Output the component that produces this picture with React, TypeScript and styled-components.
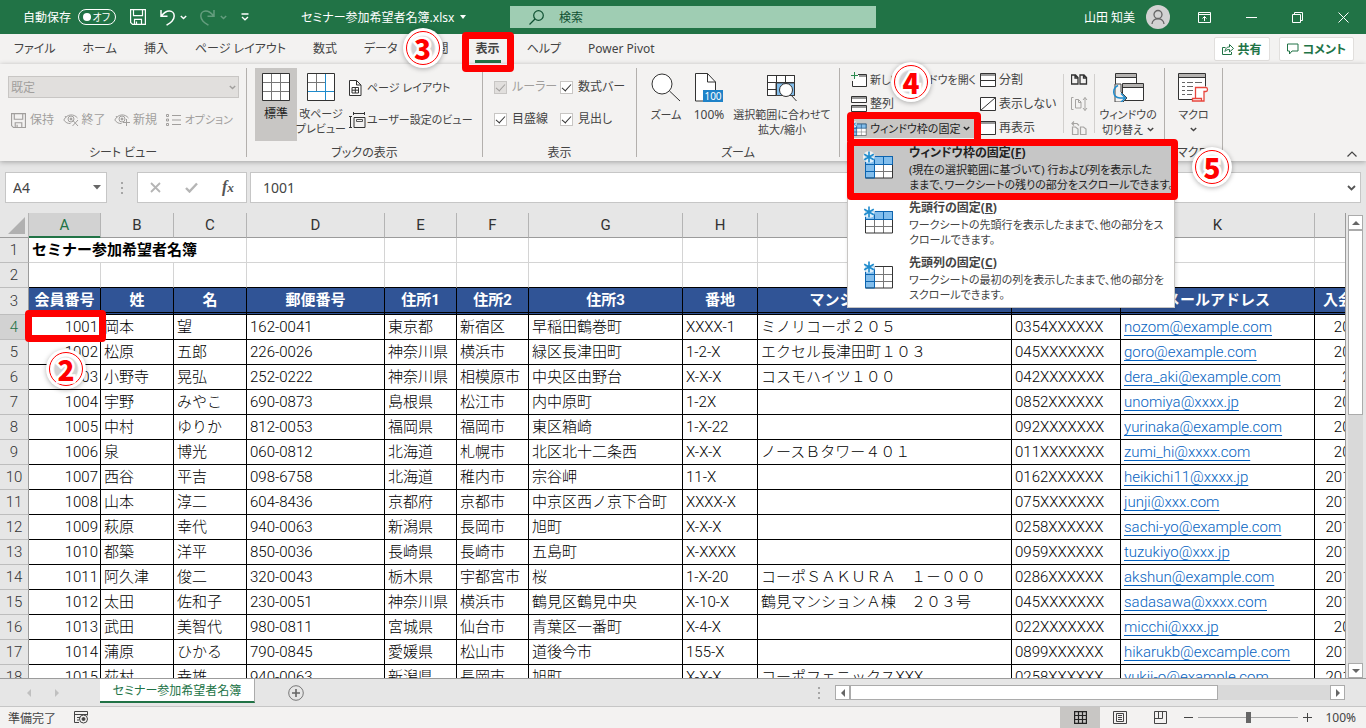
import React from "react";
import styled, { createGlobalStyle, css } from "styled-components";

const UI_FONT = '"Noto Sans", "Noto Sans CJK JP", sans-serif';
const CELL_FONT = 'Roboto, "Noto Sans CJK JP", sans-serif';
const GREEN = "#217346";
const RED = "#ff0000";

const Global = createGlobalStyle`
  * { box-sizing: border-box; }
  body { margin: 0; font-family: ${UI_FONT}; font-size: 12px; color: #444; font-feature-settings: "palt"; }
  button, input, select { font: inherit; color: inherit; font-feature-settings: inherit; }
  button { border: 0; padding: 0; background: none; white-space: nowrap; }
  svg { display: block; flex: none; }
`;

const Page = styled.div`
  height: 100vh;
  display: flex;
  flex-direction: column;
  overflow: hidden;
  background: #e6e6e6;
`;

/* ---------- annotations ---------- */

const Frame = styled.span<{ $t: number; $l: number; $r: number; $b: number; $z?: number }>`
  position: absolute;
  top: ${(p) => p.$t}px;
  left: ${(p) => p.$l}px;
  right: ${(p) => p.$r}px;
  bottom: ${(p) => p.$b}px;
  border: 7px solid ${RED};
  border-radius: 4px;
  z-index: ${(p) => p.$z ?? 5};
  pointer-events: none;
`;

const Badge = styled.span<{ $t: number; $l: number }>`
  position: absolute;
  top: ${(p) => p.$t}px;
  left: ${(p) => p.$l}px;
  width: 40px;
  height: 40px;
  border-radius: 50%;
  background: #fff;
  box-shadow: 0 1px 5px rgba(0, 0, 0, 0.3);
  display: grid;
  place-items: center;
  z-index: 20;
  font: 900 28px/28px "Noto Sans CJK JP", sans-serif;
  color: ${RED};
  -webkit-text-stroke: 5px #fff;
  paint-order: stroke fill;
  &::before {
    content: "";
    position: absolute;
    inset: 3px;
    border: 1px solid ${RED};
    border-radius: 50%;
    background: radial-gradient(circle, #d2d2d2 0 11px, #fff 13px);
  }
  & > b { position: relative; }
`;

const Step = ({ n, t, l }: { n: number; t: number; l: number }) => (
  <Badge $t={t} $l={l}>
    <b>{n}</b>
  </Badge>
);

/* ---------- title bar ---------- */

const TitleBar = styled.header`
  flex: none;
  height: 34px;
  background: ${GREEN};
  color: #fff;
  display: grid;
  grid-template-columns: 510fr 366fr 490fr;
  align-items: center;
`;
const TitleLeft = styled.div`
  display: flex;
  align-items: center;
  padding-left: 23px;
`;
const Toggle = styled.button`
  width: 38px;
  height: 16px;
  margin: 0 14px 0 7px;
  border: 1px solid #fff;
  border-radius: 8px;
  display: flex;
  align-items: center;
  justify-content: space-between;
  padding: 0 5px 0 4px;
  font-size: 10px;
  line-height: 14px;
  color: #fff;
  &::before {
    content: "";
    width: 8px;
    height: 8px;
    border-radius: 50%;
    background: #fff;
  }
`;
const QuickButton = styled.button<{ $gap?: number; $dim?: boolean }>`
  color: #fff;
  display: flex;
  align-items: center;
  gap: 5px;
  margin-right: ${(p) => p.$gap ?? 0}px;
  opacity: ${(p) => (p.$dim ? 0.3 : 1)};
`;
const FileName = styled.button`
  display: flex;
  align-items: center;
  gap: 6px;
  color: #fff;
  margin-left: 52px;
`;
const Search = styled.label`
  height: 22px;
  background: #9fcdb3;
  display: flex;
  align-items: center;
  padding-left: 19px;
  gap: 15px;
  color: #0f5132;
`;
const SearchInput = styled.input`
  flex: 1;
  min-width: 0;
  border: 0;
  outline: 0;
  padding: 0;
  background: none;
  &::placeholder { color: #0f5132; opacity: 1; }
`;
const TitleRight = styled.div`
  display: flex;
  align-items: center;
  justify-content: flex-end;
  padding-right: 17px;
`;
const Avatar = styled.span`
  width: 24px;
  height: 24px;
  margin: 0 28px 0 11px;
  border-radius: 50%;
  background: #d2d2d2;
  display: grid;
  place-items: center;
`;
const WindowButtons = styled.div`
  display: flex;
  gap: 35px;
  button { color: #fff; }
`;

/* ---------- tabs ---------- */

const TabRow = styled.nav`
  flex: none;
  height: 30px;
  background: #f3f2f1;
  display: flex;
  align-items: center;
  padding: 0 12px 0 14px;
`;
const Tabs = styled.div`
  display: flex;
  gap: 27px;
  flex: 1;
`;
const Tab = styled.button<{ $active?: boolean }>`
  position: relative;
  line-height: 20px;
  ${(p) =>
    p.$active &&
    css`
      font-weight: 700;
      &::after {
        content: "";
        position: absolute;
        left: -1px;
        right: -1px;
        bottom: -4px;
        height: 3px;
        background: ${GREEN};
      }
    `}
`;
const ShareButton = styled.button`
  height: 24px;
  margin-left: 9px;
  padding: 0 7px;
  border: 1px solid #e1dfdd;
  border-radius: 2px;
  background: #fff;
  color: ${GREEN};
  font-weight: 700;
  display: flex;
  align-items: center;
  gap: 4px;
`;

/* ---------- ribbon ---------- */

const Ribbon = styled.section`
  flex: none;
  position: relative;
  z-index: 10;
  height: 97px;
  padding: 4px 0;
  background: #f3f2f1;
  display: flex;
  box-shadow: 0 1px 5px rgba(0, 0, 0, 0.3);
`;
const Group = styled.div<{ $w: number }>`
  flex: none;
  width: ${(p) => p.$w}px;
  border-right: 1px solid #b3b0ad;
  display: flex;
  flex-direction: column;
`;
const GroupBody = styled.div<{ $pad?: number }>`
  flex: 1;
  min-height: 0;
  display: flex;
  padding-left: ${(p) => p.$pad ?? 0}px;
`;
const GroupLabel = styled.div`
  height: 12px;
  line-height: 16px;
  text-align: center;
  white-space: nowrap;
`;
const SheetView = styled.div`
  flex: 1;
  padding: 8px 7px 0 8px;
`;
const ViewSelect = styled.select`
  display: block;
  width: 100%;
  height: 22px;
  padding: 0 2px;
  border: 1px solid #c8c6c4;
  background: #e1dfdd;
  color: #a19f9d;
  opacity: 1;
  appearance: none;
`;
const SelectWrap = styled.div`
  position: relative;
  color: #a19f9d;
  & > svg { position: absolute; right: 3px; top: 9px; }
`;
const ViewActions = styled.div`
  display: flex;
  justify-content: space-between;
  padding: 12px 6px 0 3px;
  color: #a19f9d;
`;
const SmallButton = styled.button<{ $gap?: number; $compact?: boolean }>`
  display: flex;
  align-items: center;
  gap: ${(p) => p.$gap ?? 4}px;
  height: 20px;
  font-size: ${(p) => (p.$compact ? 11 : 12)}px;
  line-height: 20px;
`;
const BigButton = styled.button<{ $w: number; $active?: boolean; $compact?: boolean }>`
  flex: none;
  width: ${(p) => p.$w}px;
  height: 73px;
  padding-top: 5px;
  display: flex;
  flex-direction: column;
  align-items: center;
  gap: 5px;
  font-size: ${(p) => (p.$compact ? 11 : 12)}px;
  line-height: 15px;
  background: ${(p) => (p.$active ? "#c8c6c4" : "none")};
  color: ${(p) => (p.$active ? "#222" : "inherit")};
`;
const CaretLine = styled.span`
  display: flex;
  align-items: center;
  justify-content: center;
  gap: 4px;
`;
const Stack = styled.div<{ $gap: number; $top: number; $left?: number }>`
  display: flex;
  flex-direction: column;
  align-items: flex-start;
  gap: ${(p) => p.$gap}px;
  padding: ${(p) => p.$top}px 0 0 ${(p) => p.$left ?? 0}px;
`;
const CheckGrid = styled.div`
  display: grid;
  grid-template-columns: 66px auto;
  grid-auto-rows: 20px;
  row-gap: 12px;
  align-content: start;
  padding: 9px 0 0 11px;
`;
const CheckLabel = styled.label<{ $off?: boolean }>`
  display: flex;
  align-items: center;
  gap: 5px;
  line-height: 20px;
  white-space: nowrap;
  color: ${(p) => (p.$off ? "#a19f9d" : "inherit")};
`;
const CheckBox = styled.input`
  appearance: none;
  flex: none;
  width: 13px;
  height: 13px;
  margin: 0;
  border: 1px solid #c8c6c4;
  background: #fff;
  display: grid;
  place-items: center;
  &:disabled { background: #e1dfdd; }
  &:checked::after {
    content: "";
    width: 4px;
    height: 8px;
    margin-bottom: 3px;
    border: solid #333;
    border-width: 0 1px 1px 0;
    rotate: 42deg;
  }
  &:disabled::after { border-color: #a19f9d; }
`;
const WindowCol = styled(Stack)<{ $w: number }>`
  flex: none;
  width: ${(p) => p.$w}px;
`;
const Rule = styled.span`
  flex: none;
  width: 1px;
  height: 59px;
  margin-top: 6px;
  background: #d2d0ce;
`;
const FreezeAnchor = styled.div`
  position: relative;
  width: 124px;
  height: 20px;
  background: #c8c6c4;
`;
const FreezeButton = styled.button`
  display: flex;
  align-items: center;
  gap: 3px;
  width: 100%;
  height: 100%;
  font-size: 11px;
  color: #222;
`;
const Collapse = styled.button`
  align-self: flex-end;
  margin: 0 9px 0 auto;
`;

/* ---------- freeze menu ---------- */

const Menu = styled.div`
  position: absolute;
  top: 23px;
  left: -4px;
  width: 328px;
  border: 1px solid #c8c6c4;
  background: #fff;
  box-shadow: 1px 2px 4px rgba(0, 0, 0, 0.15);
  z-index: 12;
`;
const MenuItem = styled.button<{ $active?: boolean }>`
  position: relative;
  display: flex;
  width: 100%;
  height: 55px;
  padding: 3px 0 0 15px;
  gap: 16px;
  text-align: left;
  font-size: 12px;
  background: ${(p) => (p.$active ? "#c6c6c6" : "#fff")};
  color: ${(p) => (p.$active ? "#222" : "#444")};
  & > svg { margin-top: 6px; }
`;
const MenuTitle = styled.b`
  display: block;
  line-height: 16px;
`;
const MenuText = styled.span`
  display: block;
  margin-top: 1px;
  font-size: 11px;
  line-height: 15px;
`;

/* ---------- formula bar ---------- */

const FormulaBar = styled.section`
  flex: none;
  display: flex;
  align-items: center;
  padding: 11px 5px 10px;
  font-size: 14px;
`;
const Box = styled.div<{ $w?: number }>`
  height: 31px;
  min-width: 0;
  flex: ${(p) => (p.$w ? `0 0 ${p.$w}px` : "1")};
  border: 1px solid #c6c6c6;
  background: #fff;
  display: flex;
  align-items: center;
  justify-content: space-between;
`;
const BarInput = styled.input<{ $pad: number }>`
  flex: 1;
  min-width: 0;
  border: 0;
  outline: 0;
  padding: 0 0 0 ${(p) => p.$pad}px;
  background: none;
`;
const Dots = styled.span<{ $m: string }>`
  flex: none;
  width: 2px;
  height: 12px;
  margin: ${(p) => p.$m};
  background: repeating-linear-gradient(#a6a6a6 0 2px, transparent 2px 5px);
`;
const FxButtons = styled(Box)`
  margin-right: 3px;
  padding: 0 12px;
`;
const Fx = styled.button`
  font: italic 700 16px/20px "Liberation Serif", serif;
  color: #555;
`;

/* ---------- sheet ---------- */

const SheetArea = styled.main`
  flex: 1;
  min-height: 0;
  display: flex;
`;
const SheetClip = styled.div`
  flex: 1;
  min-width: 0;
  overflow: hidden;
  border-right: 1px solid #9b9b9b;
`;
const Sheet = styled.table`
  table-layout: fixed;
  width: 1407px;
  border-collapse: separate;
  border-spacing: 0;
  font-family: ${CELL_FONT};
  font-size: 15px;
  font-weight: 300;
  font-feature-settings: normal;
  color: #000;
  line-height: 22px;
  th, td { padding: 0; height: 25px; white-space: nowrap; overflow: hidden; }
`;
const ColHead = styled.th<{ $active?: boolean }>`
  font-weight: 400;
  color: ${(p) => (p.$active ? GREEN : "#333")};
  background: ${(p) => (p.$active ? "#d2d2d2" : "#e6e6e6")};
  border-right: 1px solid #b4b4b4;
  border-bottom: 1px solid ${(p) => (p.$active ? GREEN : "#9b9b9b")};
  box-shadow: ${(p) => (p.$active ? `inset 0 -1px ${GREEN}` : "none")};
`;
const Corner = styled(ColHead)`
  & > svg { margin-left: 8px; }
`;
const RowHead = styled.th<{ $active?: boolean }>`
  font-weight: 300;
  color: ${(p) => (p.$active ? GREEN : "#333")};
  background: ${(p) => (p.$active ? "#d2d2d2" : "#e6e6e6")};
  border-right: 1px solid #9b9b9b;
  border-bottom: 1px solid #bdbdbd;
`;
const PlainCell = styled.td<{ $last?: boolean }>`
  background: #fff;
  border-right: 1px solid #d4d4d4;
  border-bottom: 1px solid ${(p) => (p.$last ? "#000" : "#d4d4d4")};
`;
const TitleCell = styled(PlainCell)`
  && { padding-left: 3px; }
  font-weight: 700;
`;
const FieldHead = styled.th`
  && { height: 27px; }
  background: #305496;
  color: #fff;
  font-weight: 700;
  border-right: 1px solid #000;
  border-bottom: 3px double #000;
`;
const Cell = styled.td<{ $right?: boolean }>`
  && { padding: 0 2px 0 3px; }
  background: #fff;
  text-align: ${(p) => (p.$right ? "right" : "left")};
  border-right: 1px solid #000;
  border-bottom: 1px solid #000;
`;
const MarkedCell = styled(Cell)`
  && { overflow: visible; }
  position: relative;
`;
const Mail = styled.a`
  color: #0563c1;
  text-decoration: underline;
  text-underline-offset: 3px;
`;

/* ---------- scroll bars ---------- */

const VScroll = styled.div`
  flex: none;
  width: 15px;
  margin: 2px 3px 0 2px;
  display: flex;
  flex-direction: column;
  background: #d9d9d9;
`;
const HScroll = styled.div`
  width: 510px;
  height: 15px;
  display: flex;
  background: #d9d9d9;
`;
const ScrollButton = styled.button`
  flex: none;
  width: 15px;
  height: 15px;
  border: 1px solid #ababab;
  background: #fff;
  display: grid;
  place-items: center;
`;
const Thumb = styled.div<{ $grow: number }>`
  flex: ${(p) => p.$grow} 0 0;
  border: 1px solid #ababab;
  background: #fff;
`;
const Track = styled.div<{ $grow: number }>`
  flex: ${(p) => p.$grow} 0 0;
`;

/* ---------- bottom ---------- */

const SheetTabs = styled.footer`
  flex: none;
  height: 29px;
  border-top: 1px solid #9b9b9b;
  border-bottom: 1px solid #c6c6c6;
  display: flex;
  align-items: center;
  padding: 0 21px 0 25px;
`;
const SheetTab = styled.button`
  align-self: flex-start;
  height: 24px;
  width: 155px;
  margin: 0 33px 0 39px;
  background: #fff;
  border-right: 1px solid #ababab;
  border-bottom: 2px solid ${GREEN};
  color: ${GREEN};
`;
const NavArrows = styled.div`
  display: flex;
  gap: 20px;
`;
const StatusBar = styled.footer`
  flex: none;
  height: 21px;
  background: #f3f2f1;
  display: flex;
  align-items: center;
  padding: 0 10px 0 8px;
  gap: 18px;
`;
const ViewModes = styled.div`
  margin-left: auto;
  display: flex;
  height: 100%;
`;
const ViewMode = styled.button<{ $active?: boolean }>`
  width: 40px;
  display: grid;
  place-items: center;
  background: ${(p) => (p.$active ? "#c8c6c4" : "none")};
`;
const ZoomControl = styled.div`
  display: flex;
  align-items: center;
  gap: 5px;
  margin-left: -14px;
`;
const Range = styled.input`
  appearance: none;
  width: 100px;
  height: 12px;
  margin: 0;
  background: linear-gradient(#a6a6a6, #a6a6a6) center / 100% 1px no-repeat;
  &::-webkit-slider-thumb {
    appearance: none;
    width: 5px;
    height: 11px;
    background: #666;
  }
`;
const Percent = styled.span`
  margin-left: 8px;
`;

/* ---------- icons ---------- */

type IconProps = { w: number; h: number; children: React.ReactNode; sw?: number };
const Icon = ({ w, h, children, sw = 1 }: IconProps) => (
  <svg width={w} height={h} viewBox={`0 0 ${w} ${h}`} fill="none" stroke="currentColor" strokeWidth={sw} aria-hidden>
    {children}
  </svg>
);

const Chevron = () => (
  <Icon w={7} h={5} sw={1.4}>
    <path d="M.8 1 3.5 3.6 6.2 1" />
  </Icon>
);
const SaveIcon = ({ s = 16 }: { s?: number }) => (
  <svg width={s} height={s} viewBox="0 0 16 16" fill="none" stroke="currentColor" strokeWidth="1.2" aria-hidden>
    <path d="M.6.6h14.8v14.8H2.6l-2-2zM3.5.6v6h9v-6M4.500 15.4v-5h7v5M6.500 12.500v3" />
  </svg>
);
const UndoIcon = ({ flip }: { flip?: boolean }) => (
  <Icon w={15} h={17} sw={1.5}>
    <path
      transform={flip ? "translate(15 0) scale(-1 1)" : undefined}
      d="M1 1v6.3h6.5M1.3 7C4 3.5 6.5 2 9.3 2c3 0 4.9 2.3 4.9 5 0 4.3-3.5 6.5-7.7 9.2"
    />
  </Icon>
);
const EyeIcon = ({ mark }: { mark: "x" | "plus" }) => (
  <Icon w={17} h={14}>
    <path d="M.8 7C4 .6 11 .6 14.5 5M.8 7C2.5 9.5 5 10.800 7.5 10.5M3 4.5 2 3" />
    <circle cx="8" cy="6" r="3" />
    <circle cx="8" cy="6" r="1" fill="currentColor" />
    {mark === "x" ? <path d="m9.5 7 5.5 6m0-6-5.5 6" /> : <path d="M12.5 6v7M9 9.5h7" />}
  </Icon>
);
const ListIcon = () => (
  <Icon w={15} h={12}>
    <path d="M6 1.5h9M6 6h9M6 10.500h9M.5.5h2v2h-2zM.5 5h2v2h-2zM.5 9.500h2v2h-2z" />
  </Icon>
);
const GridIcon = () => (
  <Icon w={28} h={28}>
    <path d="M.5.5h27v27H.5z" fill="#fff" stroke="#333" />
    <path d="M1 9.5h26M1 18.5h26M9.5 1v26M18.5 1v26" stroke="#777" />
  </Icon>
);
const PageBreakIcon = () => (
  <Icon w={28} h={28}>
    <path d="M.5.5h27v27H.5z" fill="#fff" stroke="#333" />
    <path d="M1 9.5h17M9.5 1v17" stroke="#777" />
    <path d="M1 18.5h26M18.5 1v26" stroke="#1e8bcd" />
  </Icon>
);
const PageLayoutIcon = () => (
  <Icon w={13} h={16}>
    <path d="M.5.5h7l4.5 4.5v10.5H.5zM7.5.5v4.5h4.5" fill="#fff" stroke="#333" />
    <path d="M3 7.5h6.500v5.500H3zM6.300 7.500v5.500M3 10.200h6.500" stroke="#333" />
  </Icon>
);
const CustomViewIcon = () => (
  <Icon w={17} h={17}>
    <path d="M1.5 4v12M0 4.500h3M0 15.500h3M4 1.500h11M4.500 0v3M15.500 0v3M5 5.500h11v10H5z" stroke="#333" />
    <path d="M7.500 7.500h6v2h-6z" stroke="#555" />
  </Icon>
);
const ZoomIcon = () => (
  <Icon w={30} h={29}>
    <circle cx="11" cy="11" r="10" fill="#fff" stroke="#333" />
    <path d="m18.5 18 10.5 10" stroke="#333" />
  </Icon>
);
const Zoom100Icon = () => (
  <svg width="28" height="29" viewBox="0 0 28 29" fill="none" aria-hidden>
    <path d="M.5 28V.5h12L20.500 9v19z" fill="#fff" />
    <path d="M8 28H.5V.5h12L20.500 9v9M12.500.5V9h8" stroke="#333" />
    <path d="M8 17h20v12H8z" fill="#1e82c8" />
    <text x="18" y="27" fontSize="10" fill="#fff" textAnchor="middle" fontFamily="Noto Sans">
      100
    </text>
  </svg>
);
const ZoomSelectionIcon = () => (
  <Icon w={30} h={29}>
    <path d="M.5 2.500h27v20H.5z" fill="#fff" />
    <path d="M9 10h18.500v12.500H9z" fill="#83beec" />
    <path d="M1 9.500h26M1 16.500h8M9.500 3v19M18.500 3v6M9 22.500H.5V2.500h27v20" stroke="#333" />
    <circle cx="19" cy="17" r="6.500" fill="#fff" stroke="#333" />
    <path d="m24 22 5.500 6" stroke="#333" />
  </Icon>
);
const NewWindowIcon = () => (
  <Icon w={16} h={16}>
    <path d="M7 2.500h8.500v12H1.500V9" fill="#fff" stroke="#333" />
    <path d="M8 4h7" stroke="#999" strokeWidth="2" />
    <path d="M3.500 0v7M0 3.500h7" stroke="#2b8a4f" />
  </Icon>
);
const ArrangeIcon = () => (
  <Icon w={16} h={16}>
    <path d="M.5.5h15v6H.5zM.5 9.500h15v6H.5z" fill="#fff" stroke="#333" />
    <path d="M.5 2h15M.5 11h15" stroke="#333" />
  </Icon>
);
const SplitIcon = ({ kind }: { kind: "split" | "hide" | "show" }) => (
  <Icon w={16} h={14}>
    <path d="M.5.5h15v13H.5z" fill="#fff" stroke="#333" />
    {kind !== "hide" && <path d="M1 2h14" stroke="#999" strokeWidth="2" />}
    {kind === "split" && <path d="M0 7.500h16" stroke="#333" />}
    {kind === "hide" && <path d="M.5 13.500 15.500.5" stroke="#333" />}
  </Icon>
);
const SnowGrid = ({ row, col, small }: { row?: boolean; col?: boolean; small?: boolean }) => (
  <svg width={small ? 16 : 30} height={small ? 15 : 28} viewBox={small ? "2 0 28 28" : "0 0 30 28"} fill="none" aria-hidden>
    <path d="M2.500 6h27v21h-27z" fill="#fff" />
    {row && <path d="M2.500 6h27v7h-27z" fill="#83beec" />}
    {col && <path d="M2.500 6h9v21h-9z" fill="#83beec" />}
    <path d="M2.500 13.500h27M2.500 20.500h27M11.500 6v21M20.500 6v21" stroke="#777" />
    <path d="M2.500 5.500h27v21.500h-27z" stroke="#333" />
    {row && <path d="M2.500 5.500h27v8h-27zM11.500 6v7M20.500 6v7" stroke="#0b64b0" />}
    {col && <path d="M2.500 5.500h9v21.500h-9zM3 13.500h8M3 20.500h8" stroke="#0b64b0" />}
    <circle cx="6" cy="6" r="6" fill="#fff" fillOpacity=".75" />
    <path d="M6 .5v11M1.200 3.200l9.600 5.600M10.800 3.200 1.200 8.800" stroke="#1e8bcd" strokeWidth="1.6" />
  </svg>
);
const PagesIcon = ({ kind }: { kind: "side" | "sync" | "reset" }) => (
  <svg width="17" height="14" viewBox="0 0 17 14" fill="none" stroke={kind === "side" ? "#333" : "#a6a4a2"} aria-hidden>
    {kind === "side" && (
      <path d="M.5 2h4L7 4.500V11H.5zM4 2v3h3M9 2h4l2.500 2.500V11H9zM12.500 2v3h3" strokeWidth="1.300" />
    )}
    {kind === "sync" && (
      <path d="M2.500.5H.5v12h2M4.500 2.500h3L10 5v6H4.500zM7.500 2.500v3H10M14 .5v13M12 3l2-2.500L16 3M12 11l2 2.500 2-2.500" />
    )}
    {kind === "reset" && (
      <path d="M1.500 6h3l2.500 2v5.500H1.500zM9.500 6h3L15 8v5.500H9.500zM1 2.500h5l2 2M3 .5l-2 2 2 2" strokeWidth="1.200" />
    )}
  </svg>
);
const SwitchIcon = () => (
  <Icon w={31} h={29}>
    <path d="M2.500 14V.5h21V10" fill="#fff" stroke="#333" />
    <path d="M3 2.500h20" stroke="#b5b3b1" strokeWidth="3" />
    <path d="M3 4.500h20" stroke="#333" />
    <path d="M9.500 10.500h21v17h-21z" fill="#fff" stroke="#333" />
    <path d="M10 12.500h20" stroke="#b5b3b1" strokeWidth="3" />
    <path d="M10 14.500h20" stroke="#333" />
    <path d="M2 11h6v8l6 6-4 4H2z" fill="#f3f2f1" />
    <path d="M5 12.500c-6 3-6 12 2 12.500h5M8 20.500l4.500 4.500L8 29" stroke="#1e8bcd" strokeWidth="1.400" />
  </Icon>
);
const MacroIcon = () => (
  <Icon w={31} h={29}>
    <path d="M16 26.500H.5V.5h27v13" fill="#fff" stroke="#333" />
    <path d="M1 2.500h26" stroke="#b5b3b1" strokeWidth="3" />
    <path d="M1 4.500h26" stroke="#333" />
    <path
      d="M4 9.500h3M4 13.500h3M4 17.500h3M4 21.500h3M9 9.500h6M17 9.500h7M9 13.500h6M9 17.500h6M9 21.500h5"
      stroke="#666"
    />
    <path d="M17.500 25.500V14.500h10.500c2 0 2 4 0 4h-2v9.500H14.500v-2.500h9V28" fill="#fff" stroke="#e8453c" strokeWidth="1.300" />
  </Icon>
);
const Arrow = ({ dir, c = "#666" }: { dir: "up" | "down" | "left" | "right"; c?: string }) => {
  const shapes = { up: "M0 6 4 2l4 4z", down: "M0 2l4 4 4-4z", left: "M6 0 2 4l4 4z", right: "M2 0l4 4-4 4z" };
  return (
    <svg width="8" height="8" viewBox="0 0 8 8" fill={c} aria-hidden>
      <path d={shapes[dir]} />
    </svg>
  );
};

/* ---------- data ---------- */

const COLS: [string, number][] = [
  ["A", 72], ["B", 73], ["C", 73], ["D", 138], ["E", 72], ["F", 72],
  ["G", 154], ["H", 75], ["I", 254], ["J", 109], ["K", 194], ["L", 92],
];
const FIELDS = [
  "会員番号", "姓", "名", "郵便番号", "住所1", "住所2", "住所3", "番地",
  "マンション・ビル名等", "電話番号", "メールアドレス", "入会年月日",
];
const ROWS: string[][] = [
  ["1001", "岡本", "望", "162-0041", "東京都", "新宿区", "早稲田鶴巻町", "XXXX-1", "ミノリコーポ２０５", "0354XXXXXX", "nozom@example.com", "2018/4/10"],
  ["1002", "松原", "五郎", "226-0026", "神奈川県", "横浜市", "緑区長津田町", "1-2-X", "エクセル長津田町１０３", "045XXXXXXX", "goro@example.com", "2018/4/12"],
  ["1003", "小野寺", "晃弘", "252-0222", "神奈川県", "相模原市", "中央区由野台", "X-X-X", "コスモハイツ１００", "042XXXXXXX", "dera_aki@example.com", "2018/5/7"],
  ["1004", "宇野", "みやこ", "690-0873", "島根県", "松江市", "内中原町", "1-2X", "", "0852XXXXXX", "unomiya@xxxx.jp", "2018/6/15"],
  ["1005", "中村", "ゆりか", "812-0053", "福岡県", "福岡市", "東区箱崎", "1-X-22", "", "092XXXXXXX", "yurinaka@example.com", "2018/7/21"],
  ["1006", "泉", "博光", "060-0812", "北海道", "札幌市", "北区北十二条西", "X-X-X", "ノースＢタワー４０１", "011XXXXXXX", "zumi_hi@xxxx.com", "2018/9/18"],
  ["1007", "西谷", "平吉", "098-6758", "北海道", "稚内市", "宗谷岬", "11-X", "", "0162XXXXXX", "heikichi11@xxxx.jp", "2018/10/11"],
  ["1008", "山本", "淳二", "604-8436", "京都府", "京都市", "中京区西ノ京下合町", "XXXX-X", "", "075XXXXXXX", "junji@xxx.com", "2018/10/20"],
  ["1009", "萩原", "幸代", "940-0063", "新潟県", "長岡市", "旭町", "X-X-X", "", "0258XXXXXX", "sachi-yo@example.com", "2018/11/13"],
  ["1010", "都築", "洋平", "850-0036", "長崎県", "長崎市", "五島町", "X-XXXX", "", "0959XXXXXX", "tuzukiyo@xxx.jp", "2018/11/26"],
  ["1011", "阿久津", "俊二", "320-0043", "栃木県", "宇都宮市", "桜", "1-X-20", "コーポＳＡＫＵＲＡ　１－０００", "0286XXXXXX", "akshun@example.com", "2018/12/10"],
  ["1012", "太田", "佐和子", "230-0051", "神奈川県", "横浜市", "鶴見区鶴見中央", "X-10-X", "鶴見マンションＡ棟　２０３号", "045XXXXXXX", "sadasawa@xxxx.com", "2018/12/19"],
  ["1013", "武田", "美智代", "980-0811", "宮城県", "仙台市", "青葉区一番町", "X-4-X", "", "022XXXXXXX", "micchi@xxx.jp", "2019/1/17"],
  ["1014", "蒲原", "ひかる", "790-0845", "愛媛県", "松山市", "道後今市", "155-X", "", "0899XXXXXX", "hikarukb@excample.com", "2019/10/15"],
  ["1015", "荻村", "幸雄", "940-0063", "新潟県", "長岡市", "旭町", "X-X-X", "コーポフェニックスXXX", "0258XXXXXX", "yukii-o@example.com", "2019/11/20"],
];

const TABS = ["ファイル", "ホーム", "挿入", "ページ レイアウト", "数式", "データ", "校閲", "表示", "ヘルプ", "Power Pivot"];

const MENU = [
  { t: "ウィンドウ枠の固定", k: "F", a: "(現在の選択範囲に基づいて) 行および列を表示した", b: "ままで、ワークシートの残りの部分をスクロールできます。", row: true, col: true },
  { t: "先頭行の固定", k: "R", a: "ワークシートの先頭行を表示したままで、他の部分をス", b: "クロールできます。", row: true, col: false },
  { t: "先頭列の固定", k: "C", a: "ワークシートの最初の列を表示したままで、他の部分を", b: "スクロールできます。", row: false, col: true },
];

function TitleArea() {
  return (
    <TitleBar>
      <TitleLeft>
        自動保存
        <Toggle aria-label="自動保存">オフ</Toggle>
        <QuickButton $gap={14} aria-label="保存"><SaveIcon /></QuickButton>
        <QuickButton $gap={13} aria-label="元に戻す"><UndoIcon /><Chevron /></QuickButton>
        <QuickButton $gap={14} $dim aria-label="やり直し"><UndoIcon flip /><Chevron /></QuickButton>
        <QuickButton aria-label="カスタマイズ">
          <Icon w={8} h={8} sw={1.3}><path d="M.5 1h7M1 4l3 2.800L7 4" /></Icon>
        </QuickButton>
        <FileName>
          セミナー参加希望者名簿.xlsx
          <svg width="6" height="4" fill="#fff"><path d="M0 0h6L3 4z" /></svg>
        </FileName>
      </TitleLeft>
      <Search>
        <Icon w={15} h={15} sw={1.2}><circle cx="9.5" cy="5.5" r="4.8" /><path d="M6 9 .5 14.500" /></Icon>
        <SearchInput placeholder="検索" aria-label="検索" />
      </Search>
      <TitleRight>
        山田 知美
        <Avatar>
          <Icon w={14} h={16} sw={1.3}>
            <g stroke="#666"><circle cx="7" cy="5.5" r="4" /><path d="M1 15c.5-7 11.500-7 12 0" /></g>
          </Icon>
        </Avatar>
        <WindowButtons>
          <button aria-label="リボン"><Icon w={13} h={11}><path d="M.5.500h12v10H.5zM1 2.500h11M6.500 9V4.500M4.500 6.500l2-2 2 2" /></Icon></button>
          <button aria-label="最小化"><Icon w={11} h={11}><path d="M0 5.500h11" /></Icon></button>
          <button aria-label="元のサイズ"><Icon w={11} h={11}><path d="M.5 2.500h8v8h-8zM2.500 2.500v-2h8v8h-2" /></Icon></button>
          <button aria-label="閉じる"><Icon w={11} h={11}><path d="m.5.500 10 10m0-10-10 10" /></Icon></button>
        </WindowButtons>
      </TitleRight>
    </TitleBar>
  );
}

function TabArea() {
  return (
    <TabRow>
      <Tabs>
        {TABS.map((t) => (
          <Tab key={t} $active={t === "表示"}>
            {t}
            {t === "校閲" && <Step n={3} t={-11} l={-22} />}
            {t === "表示" && <Frame $t={-7} $l={-14} $r={-14} $b={-13} $z={15} />}
          </Tab>
        ))}
      </Tabs>
      <ShareButton>
        <Icon w={12} h={12}><path d="M3.500 4.500h-3v7h9V9M3 8.500c.5-3.500 2-4.500 4.500-4.500V1.500l4 4-4 3.500V6.500C5.500 6.500 4 7 3 8.500z" /></Icon>
        共有
      </ShareButton>
      <ShareButton>
        <Icon w={12} h={12}><path d="M.5 1h10.500v7H5l-2.500 3V8h-2z" /></Icon>
        コメント
      </ShareButton>
    </TabRow>
  );
}

function FreezeMenu() {
  return (
    <Menu role="menu">
      {MENU.map((m, i) => (
        <MenuItem key={m.k} role="menuitem" $active={i === 0}>
          <SnowGrid row={m.row} col={m.col} />
          <span>
            <MenuTitle>{m.t}(<u>{m.k}</u>)</MenuTitle>
            <MenuText>{m.a}<br />{m.b}</MenuText>
          </span>
          {i === 0 && <Frame $t={-3} $l={-1} $r={-4} $b={-3} />}
          {i === 0 && <Step n={5} t={5} l={344} />}
        </MenuItem>
      ))}
    </Menu>
  );
}

function RibbonArea() {
  return (
    <Ribbon>
      <Group $w={247}>
        <GroupBody>
          <SheetView>
            <SelectWrap>
              <ViewSelect disabled aria-label="シート ビュー"><option>既定</option></ViewSelect>
              <Chevron />
            </SelectWrap>
            <ViewActions>
              <SmallButton><SaveIcon s={15} />保持</SmallButton>
              <SmallButton $gap={2}><EyeIcon mark="x" />終了</SmallButton>
              <SmallButton $gap={2}><EyeIcon mark="plus" />新規</SmallButton>
              <SmallButton $compact><ListIcon />オプション</SmallButton>
            </ViewActions>
          </SheetView>
        </GroupBody>
        <GroupLabel>シート ビュー</GroupLabel>
      </Group>

      <Group $w={236}>
        <GroupBody $pad={8}>
          <BigButton $w={42} $active><GridIcon />標準</BigButton>
          <BigButton $w={48} $compact><PageBreakIcon /><span>改ページ<br />プレビュー</span></BigButton>
          <Stack $gap={12} $top={10} $left={4}>
            <SmallButton $gap={5} $compact><PageLayoutIcon />ページ レイアウト</SmallButton>
            <SmallButton $gap={1} $compact><CustomViewIcon />ユーザー設定のビュー</SmallButton>
          </Stack>
        </GroupBody>
        <GroupLabel>ブックの表示</GroupLabel>
      </Group>

      <Group $w={154}>
        <GroupBody>
          <CheckGrid>
            <CheckLabel $off><CheckBox type="checkbox" defaultChecked disabled />ルーラー</CheckLabel>
            <CheckLabel><CheckBox type="checkbox" defaultChecked />数式バー</CheckLabel>
            <CheckLabel><CheckBox type="checkbox" defaultChecked />目盛線</CheckLabel>
            <CheckLabel><CheckBox type="checkbox" defaultChecked />見出し</CheckLabel>
          </CheckGrid>
        </GroupBody>
        <GroupLabel>表示</GroupLabel>
      </Group>

      <Group $w={203}>
        <GroupBody $pad={7}>
          <BigButton $w={44} $compact><ZoomIcon />ズーム</BigButton>
          <BigButton $w={42}><Zoom100Icon />100%</BigButton>
          <BigButton $w={104} $compact><ZoomSelectionIcon /><span>選択範囲に合わせて<br />拡大/縮小</span></BigButton>
        </GroupBody>
        <GroupLabel>ズーム</GroupLabel>
      </Group>

      <Group $w={325}>
        <GroupBody $pad={11}>
          <WindowCol $gap={4} $top={2} $w={129}>
            <SmallButton $gap={3} $compact><NewWindowIcon />新しいウィンドウを開く</SmallButton>
            <SmallButton $gap={3}><ArrangeIcon />整列</SmallButton>
            <FreezeAnchor>
              <FreezeButton aria-haspopup="menu"><SnowGrid row col small />ウィンドウ枠の固定<Chevron /></FreezeButton>
              <Frame $t={-6} $l={-4} $r={-6} $b={-8} />
              <FreezeMenu />
              <Step n={4} t={-56} l={40} />
            </FreezeAnchor>
          </WindowCol>
          <WindowCol $gap={4} $top={2} $w={83}>
            <SmallButton $gap={3}><SplitIcon kind="split" />分割</SmallButton>
            <SmallButton $gap={3}><SplitIcon kind="hide" />表示しない</SmallButton>
            <SmallButton $gap={3}><SplitIcon kind="show" />再表示</SmallButton>
          </WindowCol>
          <Rule />
          <WindowCol $gap={4} $top={2} $left={7} $w={30}>
            <SmallButton aria-label="並べて比較"><PagesIcon kind="side" /></SmallButton>
            <SmallButton aria-label="同時にスクロール"><PagesIcon kind="sync" /></SmallButton>
            <SmallButton aria-label="位置を元に戻す"><PagesIcon kind="reset" /></SmallButton>
          </WindowCol>
          <Rule />
          <BigButton $w={66} $compact>
            <SwitchIcon />
            <span>ウィンドウの<CaretLine>切り替え<Chevron /></CaretLine></span>
          </BigButton>
        </GroupBody>
        <GroupLabel />
      </Group>

      <Group $w={58}>
        <GroupBody>
          <BigButton $w={57} $compact><MacroIcon />マクロ<Chevron /></BigButton>
        </GroupBody>
        <GroupLabel>マクロ</GroupLabel>
      </Group>
      <Collapse aria-label="リボンを折りたたむ">
        <Icon w={10} h={6} sw={1.2}><path d="M.5 5.500 5 1l4.500 4.500" /></Icon>
      </Collapse>
    </Ribbon>
  );
}

function FormulaArea() {
  return (
    <FormulaBar>
      <Box $w={102}>
        <BarInput $pad={7} defaultValue="A4" aria-label="名前ボックス" />
        <svg width="15" height="5" viewBox="0 0 15 5" fill="#666"><path d="M2 0h8L6 4.500z" /></svg>
      </Box>
      <Dots $m="0 14px" />
      <FxButtons $w={110}>
        <button aria-label="キャンセル"><Icon w={11} h={11} sw={1.8}><path d="m1 1 9 9m0-9-9 9" stroke="#b5b5b5" /></Icon></button>
        <button aria-label="入力"><Icon w={13} h={11} sw={2.4}><path d="m1 6 3.500 3.500L12 1.500" stroke="#b5b5b5" /></Icon></button>
        <Fx aria-label="関数の挿入">f<small>x</small></Fx>
      </FxButtons>
      <Box>
        <BarInput $pad={12} defaultValue="1001" aria-label="数式バー" />
        <svg width="15" height="6" viewBox="0 0 15 6" fill="none" stroke="#555" strokeWidth="1.8"><path d="m3 1 3.500 3.500L10 1" /></svg>
      </Box>
    </FormulaBar>
  );
}

function Grid() {
  return (
    <SheetArea>
      <SheetClip>
        <Sheet>
          <colgroup>
            <col style={{ width: 29 }} />
            {COLS.map(([c, w]) => <col key={c} style={{ width: w }} />)}
          </colgroup>
          <thead>
            <tr>
              <Corner><svg width="17" height="17" fill="#b1b1b1"><path d="M17 0v17H0z" /></svg></Corner>
              {COLS.map(([c]) => <ColHead key={c} $active={c === "A"}>{c}</ColHead>)}
            </tr>
          </thead>
          <tbody>
            <tr>
              <RowHead>1</RowHead>
              <TitleCell colSpan={3}>セミナー参加希望者名簿</TitleCell>
              {COLS.slice(3).map(([c]) => <PlainCell key={c} />)}
            </tr>
            <tr>
              <RowHead>2</RowHead>
              {COLS.map(([c]) => <PlainCell key={c} $last />)}
            </tr>
            <tr>
              <RowHead>3</RowHead>
              {FIELDS.map((f) => <FieldHead key={f}>{f}</FieldHead>)}
            </tr>
            {ROWS.map((r, i) => (
              <tr key={r[0]}>
                <RowHead $active={i === 0}>{i + 4}</RowHead>
                {r.map((v, j) => {
                  if (i === 0 && j === 0)
                    return (
                      <MarkedCell key={j} $right>
                        {v}
                        <Frame $t={-5} $l={-4} $r={-6} $b={-3} />
                        <Step n={2} t={34} l={17} />
                      </MarkedCell>
                    );
                  return (
                    <Cell key={j} $right={j === 0 || j === 11}>
                      {j === 10 ? <Mail href={`mailto:${v}`}>{v}</Mail> : v}
                    </Cell>
                  );
                })}
              </tr>
            ))}
          </tbody>
        </Sheet>
      </SheetClip>
      <VScroll>
        <ScrollButton aria-label="上へ"><Arrow dir="up" /></ScrollButton>
        <Thumb $grow={184} />
        <Track $grow={250} />
        <ScrollButton aria-label="下へ"><Arrow dir="down" /></ScrollButton>
      </VScroll>
    </SheetArea>
  );
}

function Bottom() {
  return (
    <>
      <SheetTabs>
        <NavArrows><Arrow dir="left" c="#c0c0c0" /><Arrow dir="right" c="#c0c0c0" /></NavArrows>
        <SheetTab>セミナー参加希望者名簿</SheetTab>
        <button aria-label="新しいシート">
          <Icon w={16} h={16}><circle cx="8" cy="8" r="7.3" stroke="#777" /><path d="M8 4v8M4 8h8" stroke="#666" strokeWidth="1.6" /></Icon>
        </button>
        <Dots $m="0 15px 0 auto" />
        <HScroll>
          <ScrollButton aria-label="左へ"><Arrow dir="left" /></ScrollButton>
          <Thumb $grow={368} />
          <Track $grow={112} />
          <ScrollButton aria-label="右へ"><Arrow dir="right" /></ScrollButton>
        </HScroll>
      </SheetTabs>
      <StatusBar>
        準備完了
        <Icon w={15} h={13}>
          <path d="M5 11.500H.5V.5h13v4M.5 3.500h13M3 6.500h3M3 9h2" />
          <circle cx="9.5" cy="8" r="4" /><circle cx="9.5" cy="8" r="1.5" fill="#444" />
        </Icon>
        <ViewModes>
          <ViewMode $active aria-label="標準"><Icon w={13} h={13} sw={1.2}><path d="M.6.6h11.800v11.800H.6zM4.500.5v12M8.500.5v12M.5 4.500h12M.5 8.500h12" stroke="#222" /></Icon></ViewMode>
          <ViewMode aria-label="ページ レイアウト"><Icon w={14} h={13}><path d="M.5.500h13v12H.5zM3.500 2.500h7v8h-7zM5 4.500h4M5 6.500h4M5 8.500h4" /></Icon></ViewMode>
          <ViewMode aria-label="改ページ プレビュー"><Icon w={13} h={13}><path d="M.5.5h12v12H.5zM4.500.5v7M8.500.5v7h-8" /></Icon></ViewMode>
        </ViewModes>
        <ZoomControl>
          <button aria-label="縮小"><Icon w={9} h={9}><path d="M0 4.500h9" /></Icon></button>
          <Range type="range" min={0} max={100} defaultValue={50} aria-label="ズーム" />
          <button aria-label="拡大"><Icon w={9} h={9}><path d="M0 4.500h9M4.500 0v9" /></Icon></button>
          <Percent>100%</Percent>
        </ZoomControl>
      </StatusBar>
    </>
  );
}

export default function App() {
  return (
    <Page>
      <Global />
      <TitleArea />
      <TabArea />
      <RibbonArea />
      <FormulaArea />
      <Grid />
      <Bottom />
    </Page>
  );
}
